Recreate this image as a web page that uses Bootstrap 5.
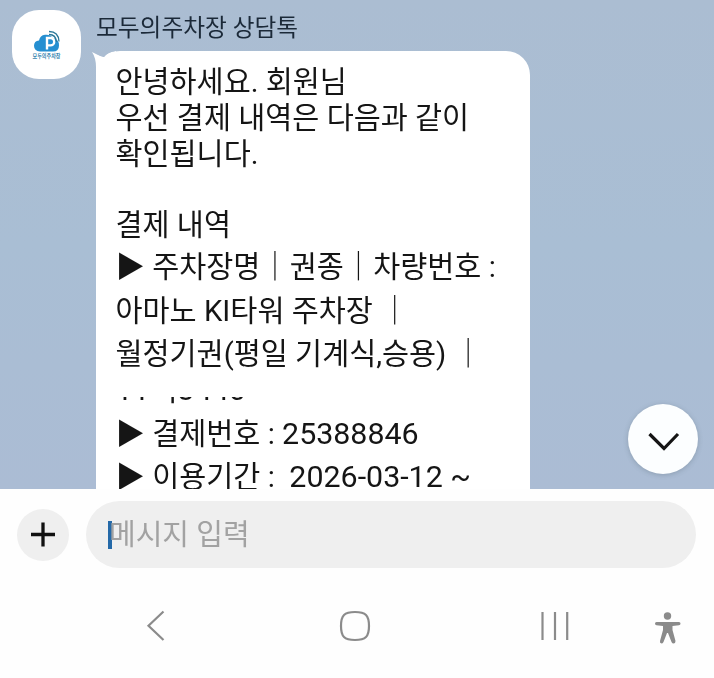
<!DOCTYPE html>
<html lang="ko">
<head>
<meta charset="utf-8">
<meta name="viewport" content="width=device-width, initial-scale=1">
<title>모두의주차장 상담톡</title>
<link href="https://cdn.jsdelivr.net/npm/bootstrap@5.3.0/dist/css/bootstrap.min.css" rel="stylesheet">
<style>
body{font-family:Roboto,"Noto Sans CJK KR",sans-serif;background:#fefefe;color:#151515;width:714px;height:678px;overflow:hidden}
.chat{height:489px;background:linear-gradient(180deg,#abbdd2,#a9bed4 50%,#abbcd4);padding:10px 0 0 12px}
.avatar{width:69px;height:69px;border-radius:27px;background:#fff}
.talk{margin-left:15px;width:434px;will-change:transform}
.sender{height:41px;line-height:37px;font-size:23.7px;color:#1b2938}
.bubble{height:450px;padding:13px 0 0 19.5px;background:#fff;border-radius:24px 24px 0 0}
.tail{left:-4px;top:0}
.ln{font-size:29.4px;height:36px;line-height:36px;white-space:pre}
.gap-above{margin-top:35px}
.tall{height:43.5px;line-height:43.5px}
.first-tall{margin-top:3px}
.cut{height:15px;margin-top:20px}
.cut>div{margin-top:-29px}
.num{font-size:30.4px}
.down{width:70px;height:70px;right:16px;bottom:15px;background:#fcfeff;box-shadow:0 1px 5px rgba(70,90,100,.3)}
.composer{height:91px;padding:0 18px 0 17px}
.plus{width:52px;height:52px;background:#efefef}
.entry{height:67px;margin-left:17px;background:#efefef;padding-left:21.5px;font-size:29px;color:#a2a2a2}
.caret{width:4px;height:28px;background:#2469a8}
.hint{margin-left:-3px;margin-top:3px;will-change:transform}
.sysnav{height:98px}
</style>
<script src="https://cdn.jsdelivr.net/npm/bootstrap@5.3.0/dist/js/bootstrap.bundle.min.js"></script>
</head>
<body>
<main class="chat d-flex align-items-start position-relative overflow-hidden">
  <div class="avatar flex-shrink-0">
    <svg class="d-block" width="70" height="70" viewBox="0 0 70 70">
      <path d="M28 41.500Q22 41 22 35.800Q22 31 27 30.500Q28 25.500 33 24.800Q38 24 41 28Q47 29 47 35.500Q47 41.500 41 41.500Z" fill="#258fd1"/>
      <path d="M35 39.500V28h3.500a3.700 3.700 0 0 1 0 7.400H35" fill="none" stroke="#fff" stroke-width="2.400"/>
      <path d="M37 24.500q7 0 7.500 7.500M37 21.500q9.500 0 10 10" fill="none" stroke="#2b7898" stroke-width="1.300"/>
      <text x="20.500" y="47.500" font-size="5.800" font-weight="700" textLength="28" lengthAdjust="spacingAndGlyphs" fill="#3786b0">모두의주차장</text>
    </svg>
  </div>
  <section class="talk flex-shrink-0">
    <div class="sender">모두의주차장 상담톡</div>
    <div class="bubble position-relative">
      <svg class="tail position-absolute" width="24" height="24" viewBox="0 0 24 24"><path d="M0 1Q4 7 4 16V24H24V0Q15 1 12 6Q5 4 0 1Z" fill="#fff"/><path d="M4 0H24Q16 1 12 6Q7 5 4 2Z" fill="#abbdd2"/></svg>
      <div class="ln">안녕하세요. 회원님</div>
      <div class="ln">우선 결제 내역은 다음과 같이</div>
      <div class="ln">확인됩니다.</div>
      <div class="ln gap-above">결제 내역</div>
      <div class="ln tall first-tall">▶ 주차장명｜권종｜차량번호 :</div>
      <div class="ln tall">아마노 KI타워 주차장 ｜</div>
      <div class="ln tall">월정기권(평일 기계식,승용) ｜</div>
      <div class="cut overflow-hidden"><div class="ln tall num">11머3440</div></div>
      <div class="ln tall">▶ 결제번호 : <span class="num">25388846</span></div>
      <div class="ln tall">▶ 이용기간 :  <span class="num">2026-03-12 ~</span></div>
    </div>
  </section>
  <button class="down btn border-0 rounded-circle position-absolute p-0" aria-label="아래로">
    <svg class="d-block" width="70" height="70" viewBox="0 0 70 70"><path d="M21.500 30L36 44.500L50 30" fill="none" stroke="#151515" stroke-width="3.200"/></svg>
  </button>
</main>
<footer class="composer d-flex align-items-center">
  <button class="plus btn border-0 rounded-circle p-0 flex-shrink-0" aria-label="추가">
    <svg class="d-block" width="52" height="52" viewBox="0 0 52 52"><path d="M14 25.500H38M26 13.500V37.500" stroke="#111" stroke-width="3.300"/></svg>
  </button>
  <div class="entry flex-grow-1 rounded-pill d-flex align-items-center"><span class="caret"></span><span class="hint">메시지 입력</span></div>
</footer>
<nav class="sysnav">
  <svg class="d-block" width="714" height="98" viewBox="0 580 714 98" fill="none" stroke="#8b8b8b" stroke-width="2.200">
    <path d="M163.500 611.500L148.500 625.700L163.500 640"/>
    <path d="M355 612Q363 612 366 615T369 626T366 637T355 640T344 637T341 626T344 615T355 612Z"/>
    <path d="M542.500 612V640M555 612V640M567.200 612V640"/>
    <g fill="#8b8b8b" stroke="none"><circle cx="667.500" cy="616" r="3.700"/><path d="M656.500 622H679Q680.500 622 680.500 623.500T679 625.200L672.500 626V630L675.500 641Q675.500 643.500 673.500 643.500Q672.300 643.500 671.500 642L668 633H667L663.500 642Q662.700 643.500 661.500 643.500Q659.500 643 660 641L663 630V626L656.500 625.200Q655 625 655 623.500T656.500 622Z"/></g>
  </svg>
</nav>
</body>
</html>
